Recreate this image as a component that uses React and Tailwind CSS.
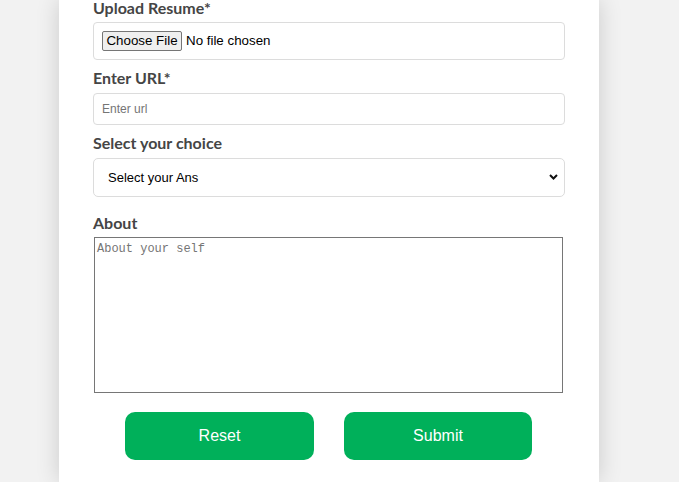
import React from "react";

function Label({ children, className = "" }) {
  return (
    <label
      className={
        "block text-[16px] leading-[16px] font-bold text-[#454545] font-['Lato','Open_Sans',sans-serif] " +
        className
      }
    >
      {children}
    </label>
  );
}

export default function App() {
  return (
    <div className="min-h-[482px] w-full bg-[#f2f2f2] overflow-hidden">
      <div className="ml-[59px] w-[540px] min-h-[482px] bg-white shadow-[0_0_22px_rgba(0,0,0,0.16)] px-[34px] font-['Liberation_Sans',Arial,sans-serif]">
        <Label>Upload Resume*</Label>
        <div className="mt-[6px] h-[38px] border border-[#dcdcdc] rounded-[4px] flex items-center pl-[8px]">
          <span className="h-[20px] w-[80px] flex items-center justify-center bg-[#efefef] border border-[#767676] rounded-[2px] text-[13.33px] text-black">
            Choose File
          </span>
          <span className="ml-[4px] text-[13.33px] text-black">No file chosen</span>
        </div>

        <Label className="mt-[10px]">Enter URL*</Label>
        <input
          type="text"
          placeholder="Enter url"
          className="mt-[7px] block w-full h-[32px] border border-[#dcdcdc] rounded-[4px] px-[8px] text-[12px] text-black placeholder:text-[#757575] outline-none"
        />

        <Label className="mt-[10px]">Select your choice</Label>
        <div className="relative mt-[7px]">
          <select className="block w-full h-[39px] appearance-none border border-[#dcdcdc] rounded-[5px] pl-[14px] pr-[30px] text-[13px] text-black bg-white outline-none">
            <option>Select your Ans</option>
          </select>
          <svg
            className="absolute right-[7px] top-[16px] pointer-events-none"
            width="9"
            height="6"
            viewBox="0 0 9 6"
          >
            <path d="M1 1 L4.5 4.5 L8 1" fill="none" stroke="#111" strokeWidth="2" />
          </svg>
        </div>

        <Label className="mt-[18px]">About</Label>
        <textarea
          placeholder="About your self"
          className="mt-[6px] ml-[1px] block w-[469px] h-[156px] border border-[#767676] p-[2px] text-[12px] font-['Liberation_Mono',monospace] placeholder:text-[#757575] resize-none outline-none"
        />

        <div className="mt-[19px] flex gap-[30px] pl-[32px] pb-[22px]">
          <button className="w-[189px] h-[48px] rounded-[10px] bg-[#00b05a] text-white text-[16px]">
            Reset
          </button>
          <button className="w-[188px] h-[48px] rounded-[10px] bg-[#00b05a] text-white text-[16px]">
            Submit
          </button>
        </div>
      </div>
    </div>
  );
}
